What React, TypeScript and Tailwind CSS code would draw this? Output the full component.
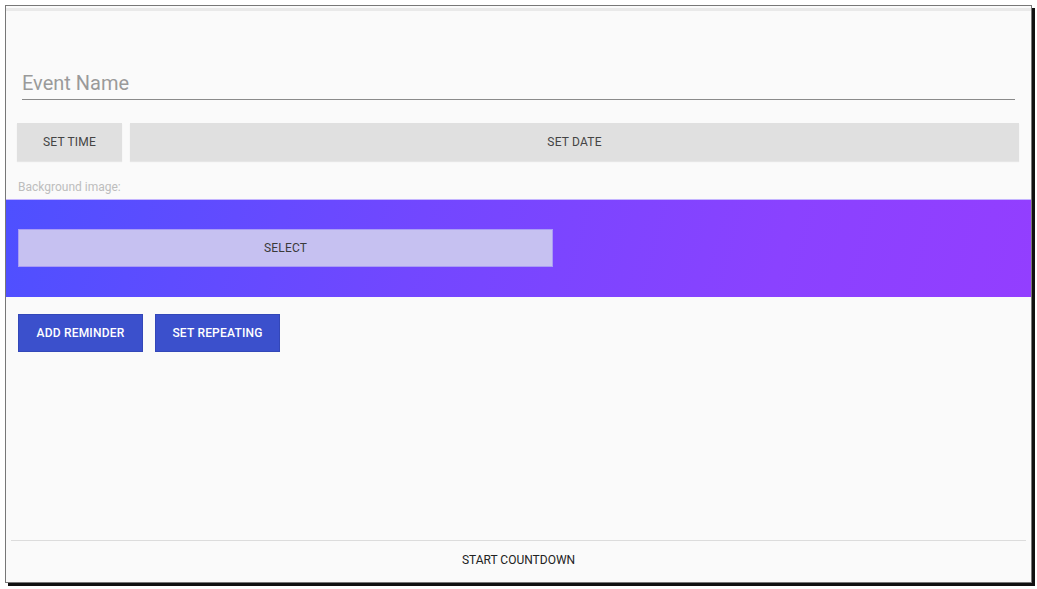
import type { ReactNode } from 'react'

function FlatButton({ children, className }: { children: ReactNode; className: string }) {
  return (
    <button
      type="button"
      className={`flex h-[38px] items-center justify-center text-[12px] uppercase tracking-[0.2px] ${className}`}
    >
      {children}
    </button>
  )
}

export default function App() {
  return (
    <div className="h-[589px] w-full bg-white pl-[5px] pt-[5px] font-['Roboto',sans-serif]">
      <div className="flex h-[578px] w-[1027px] flex-col border border-[#777] bg-[#fafafa] shadow-[3px_3px_0_#111]">
        <div className="mt-[2px] h-[3px] bg-[#e9e9e9]" />

        {/* event name field */}
        <div className="ml-[16px] mr-[16px] mt-[58px] border-b border-[#8a8a8a] pb-[2px]">
          <input
            placeholder="Event Name"
            className="w-full bg-transparent text-[20px] leading-[28px] text-[#333] outline-none placeholder:text-[#9a9a9a]"
          />
        </div>

        <div className="ml-[11px] mr-[12px] mt-[23px] flex gap-[8px]">
          <FlatButton className="w-[105px] bg-[#e0e0e0] text-[#444] shadow-[0_1px_1px_rgba(0,0,0,0.08)]">Set time</FlatButton>
          <FlatButton className="flex-1 bg-[#e0e0e0] text-[#444] shadow-[0_1px_1px_rgba(0,0,0,0.08)]">Set date</FlatButton>
        </div>

        <div className="ml-[12px] mt-[19px] text-[12px] leading-[14px] text-[#bdbdbd]">Background image:</div>

        <div className="mt-[5px] h-[98px] border-t border-[#c4b4ff] bg-[linear-gradient(105deg,#4e50ff_0%,#7247ff_40%,#8a42ff_75%,#933eff_100%)] px-[12px] pt-[29px]">
          <FlatButton className="w-[535px] border border-[#a99cf5] bg-[#c6c1f1] text-[#3a3a3a]">Select</FlatButton>
        </div>

        <div className="ml-[12px] mt-[17px] flex gap-[12px]">
          <FlatButton className="w-[125px] border border-[#3347b8] bg-[#3b50cc] font-medium text-white">Add reminder</FlatButton>
          <FlatButton className="w-[125px] border border-[#3347b8] bg-[#3b50cc] font-medium text-white">Set repeating</FlatButton>
        </div>

        <div className="mt-auto mx-[5px] border-t border-[#dcdcdc]" />
        <div className="flex h-[41px] items-center justify-center pb-[4px] text-[12px] uppercase text-[#222]">
          Start countdown
        </div>
      </div>
    </div>
  )
}
